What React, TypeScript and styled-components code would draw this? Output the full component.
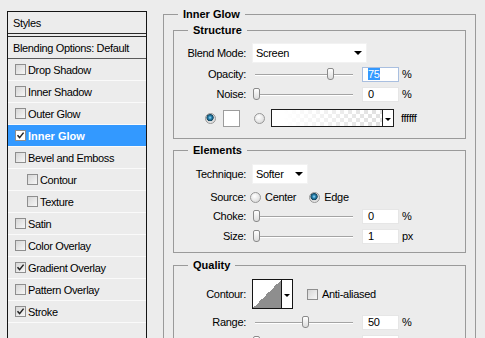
import styled, { createGlobalStyle } from 'styled-components';

const GlobalStyle = createGlobalStyle`
  html, body {
    margin: 0;
    height: 100%;
    overflow: hidden;
    background: #ececec;
  }
  body {
    font-family: "Liberation Sans", Arial, sans-serif;
    font-size: 11px;
    color: #000;
  }
`;

const Page = styled.div`
  display: flex;
  align-items: flex-start;
  box-sizing: border-box;
  height: 100vh;
  padding: 7px 0 0 7px;
`;

/* ---------- left list ---------- */

const StylesList = styled.div`
  flex-shrink: 0;
  box-sizing: border-box;
  width: 140px;
  height: 340px;
  margin-top: 4px;
  border: 1px solid #151515;
  border-bottom: none;
  letter-spacing: -0.35px;
`;

const ListHeader = styled.div`
  height: 21px;
  line-height: 22px;
  padding-left: 5px;
  border-bottom: 4px double #2a2a2a;
`;

const ListRow = styled.div<{ $selected?: boolean; $indent?: boolean; $strong?: boolean }>`
  display: flex;
  align-items: center;
  gap: 2px;
  height: 21px;
  padding-left: ${p => (p.$indent ? 19 : 7)}px;
  border-bottom: 1px solid ${p => (p.$strong ? '#5a5a5a' : '#fafafa')};
  background: ${p => (p.$selected ? '#3399ff' : 'transparent')};
  color: ${p => (p.$selected ? '#fff' : '#000')};
  font-weight: ${p => (p.$selected ? 'bold' : 'normal')};
  letter-spacing: ${p => (p.$selected ? '0' : '-0.35px')};
`;

const OptionsRow = styled(ListRow)`
  padding-left: 5px;
`;

const Box = styled.span<{ $white?: boolean }>`
  display: inline-flex;
  align-items: center;
  justify-content: center;
  box-sizing: border-box;
  width: 11px;
  height: 11px;
  flex-shrink: 0;
  border: 1px solid #8e8e8e;
  background: ${p => (p.$white ? '#fff' : 'linear-gradient(135deg, #d6d6d6, #f7f7f7)')};
`;

function CheckBox({ checked, white }: { checked?: boolean; white?: boolean }) {
  return (
    <Box $white={white}>
      {checked && (
        <svg width="9" height="9" viewBox="0 0 9 9">
          <path d="M1.5 4.2 L3.6 6.6 L7.6 1.6" fill="none" stroke="#222" strokeWidth="1.5" />
        </svg>
      )}
    </Box>
  );
}

const styleItems = [
  { name: 'Drop Shadow' },
  { name: 'Inner Shadow' },
  { name: 'Outer Glow' },
  { name: 'Inner Glow', checked: true, selected: true },
  { name: 'Bevel and Emboss' },
  { name: 'Contour', indent: true },
  { name: 'Texture', indent: true },
  { name: 'Satin' },
  { name: 'Color Overlay' },
  { name: 'Gradient Overlay', checked: true },
  { name: 'Pattern Overlay' },
  { name: 'Stroke', checked: true },
];

/* ---------- right panel ---------- */

const Settings = styled.div`
  margin-left: 16px;
`;

const Group = styled.fieldset<{ $inner?: boolean; $gap?: number; $pb?: number }>`
  min-width: 0;
  width: ${p => (p.$inner ? 'auto' : '313px')};
  height: ${p => (p.$inner ? 'auto' : '400px')};
  box-sizing: border-box;
  margin: ${p => (p.$inner ? `${p.$gap ?? 0}px 9px 0` : '0')};
  padding: 0 0 ${p => p.$pb ?? 0}px;
  border: 1px solid #9a9a9a;
`;

const GroupTitle = styled.legend`
  margin-left: 14px;
  padding: 0 5px;
  height: 14px;
  line-height: 14px;
  font-weight: bold;
`;

const Row = styled.div<{ $h?: number; $mt?: number; $pl?: number }>`
  display: flex;
  align-items: center;
  height: ${p => p.$h ?? 20}px;
  margin-top: ${p => p.$mt ?? 0}px;
  padding-left: ${p => p.$pl ?? 0}px;
  letter-spacing: -0.3px;
`;

const Label = styled.span`
  flex-shrink: 0;
  width: 72px;
  margin-right: 6px;
  text-align: right;
`;

const Dropdown = styled.div<{ $w: number }>`
  display: flex;
  align-items: center;
  justify-content: space-between;
  box-sizing: border-box;
  width: ${p => p.$w}px;
  height: 20px;
  padding: 0 4px 0 3px;
  background: #fff;
  border: 1px solid #f2f2f2;
`;

const Caret = styled.span`
  width: 0;
  height: 0;
  border-left: 4px solid transparent;
  border-right: 4px solid transparent;
  border-top: 4px solid #000;
`;

const SliderTrack = styled.div`
  position: relative;
  flex-shrink: 0;
  width: 104px;
  height: 14px;
  &::before {
    content: '';
    position: absolute;
    left: 3px;
    right: 3px;
    top: 7px;
    height: 1px;
    background: #a4a4a4;
    box-shadow: 0 1px 0 #fff;
  }
`;

const Thumb = styled.span`
  position: absolute;
  top: 1px;
  box-sizing: border-box;
  width: 7px;
  height: 12px;
  border: 1px solid #8a8a8a;
  border-radius: 2px 2px 3px 3px;
  background: linear-gradient(#ffffff, #dcdcdc);
`;

const NumberBox = styled.div<{ $focus?: boolean }>`
  box-sizing: border-box;
  width: 37px;
  height: 15px;
  margin-left: 6px;
  padding-left: 5px;
  line-height: 13px;
  background: #fff;
  border: 1px solid ${p => (p.$focus ? '#a9bfe0' : '#e6e6e6')};
`;

const Highlight = styled.span`
  background: #3399ff;
  color: #fff;
`;

const Unit = styled.span`
  margin-left: 3px;
`;

function Slider({
  label,
  value,
  pos,
  unit,
  focus,
  mt,
}: {
  label: string;
  value: number;
  pos: number;
  unit: string;
  focus?: boolean;
  mt?: number;
}) {
  return (
    <Row $mt={mt}>
      <Label>{label}</Label>
      <SliderTrack>
        <Thumb style={{ left: 1 + pos * 0.98 }} />
      </SliderTrack>
      <NumberBox $focus={focus}>{focus ? <Highlight>{value}</Highlight> : value}</NumberBox>
      <Unit>{unit}</Unit>
    </Row>
  );
}

const RadioDot = styled.span<{ $on?: boolean; $ml?: number }>`
  flex-shrink: 0;
  box-sizing: border-box;
  width: 11px;
  height: 11px;
  margin-left: ${p => p.$ml ?? 0}px;
  border-radius: 50%;
  border: 1px solid #979797;
  background: ${p =>
    p.$on
      ? 'radial-gradient(circle at 45% 40%, #9ee0ff 0, #2b86b3 1.6px, #12455f 3.3px, #d9d9d9 3.9px, #f6f6f6 100%)'
      : 'radial-gradient(circle at 40% 35%, #ffffff, #d2d2d2)'};
`;

const Swatch = styled.div`
  box-sizing: border-box;
  width: 17px;
  height: 17px;
  margin-left: 7px;
  background: #fff;
  border: 1px solid #9c9c9c;
`;

const GradientPicker = styled.div`
  display: flex;
  box-sizing: border-box;
  width: 123px;
  height: 18px;
  margin-left: 6px;
  border: 1px solid #1e1e1e;
`;

const GradientFill = styled.div`
  flex: 1;
  background:
    linear-gradient(to right, #fff 10%, rgba(255, 255, 255, 0) 90%),
    repeating-conic-gradient(#e2e2e2 0 25%, #fff 0 50%) 0 0 / 8px 8px;
`;

const PickerArrow = styled.div`
  display: flex;
  align-items: center;
  justify-content: center;
  width: 10px;
  background: #fff;
  border-left: 1px solid #1e1e1e;
`;

const SmallCaret = styled(Caret)`
  border-left-width: 3px;
  border-right-width: 3px;
  border-top-width: 3px;
  margin-top: 2px;
`;

const HexText = styled.span`
  margin-left: 7px;
`;

const OptionText = styled.span<{ $ml?: number }>`
  margin-left: ${p => p.$ml ?? 4}px;
`;

const ContourPicker = styled.div`
  display: flex;
  box-sizing: border-box;
  width: 41px;
  height: 30px;
  border: 1px solid #141414;
`;

const ContourGraph = styled.div`
  flex: 1;
  background: linear-gradient(to bottom right, #fff 50%, #8e8e8e 50%);
`;

const ContourArrow = styled(PickerArrow)`
  border-left-color: #141414;
`;

const AntiAliasBox = styled(Box)`
  margin-left: 14px;
`;

export default function App() {
  return (
    <>
      <GlobalStyle />
      <Page>
        <StylesList>
          <ListHeader>Styles</ListHeader>
          <OptionsRow $strong>Blending Options: Default</OptionsRow>
          {styleItems.map(item => (
            <ListRow key={item.name} $selected={item.selected} $indent={item.indent}>
              <CheckBox checked={item.checked} white={item.selected} />
              <span>{item.name}</span>
            </ListRow>
          ))}
        </StylesList>

        <Settings>
          <Group>
            <GroupTitle>Inner Glow</GroupTitle>

            <Group $inner $gap={2} $pb={10}>
              <GroupTitle>Structure</GroupTitle>
              <Row $mt={6}>
                <Label>Blend Mode:</Label>
                <Dropdown $w={115}>
                  <span>Screen</span>
                  <Caret />
                </Dropdown>
              </Row>
              <Slider label="Opacity:" value={75} pos={75} unit="%" focus mt={1} />
              <Slider label="Noise:" value={0} pos={0} unit="%" />
              <Row $mt={4} $pl={31}>
                <RadioDot $on />
                <Swatch />
                <RadioDot $ml={14} />
                <GradientPicker>
                  <GradientFill />
                  <PickerArrow>
                    <SmallCaret />
                  </PickerArrow>
                </GradientPicker>
                <HexText>ffffff</HexText>
              </Row>
            </Group>

            <Group $inner $gap={4} $pb={6}>
              <GroupTitle>Elements</GroupTitle>
              <Row $mt={7}>
                <Label>Technique:</Label>
                <Dropdown $w={56}>
                  <span>Softer</span>
                  <Caret />
                </Dropdown>
              </Row>
              <Row $mt={4} $h={18}>
                <Label>Source:</Label>
                <RadioDot $ml={-2} />
                <OptionText>Center</OptionText>
                <RadioDot $ml={13} $on />
                <OptionText>Edge</OptionText>
              </Row>
              <Slider label="Choke:" value={0} pos={0} unit="%" />
              <Slider label="Size:" value={1} pos={0} unit="px" />
            </Group>

            <Group $inner $gap={5}>
              <GroupTitle>Quality</GroupTitle>
              <Row $mt={7} $h={30}>
                <Label>Contour:</Label>
                <ContourPicker>
                  <ContourGraph />
                  <ContourArrow>
                    <SmallCaret />
                  </ContourArrow>
                </ContourPicker>
                <AntiAliasBox />
                <OptionText>Anti-aliased</OptionText>
              </Row>
              <Slider label="Range:" value={50} pos={50} unit="%" mt={3} />
              <Slider label="Jitter:" value={0} pos={0} unit="%" />
            </Group>
          </Group>
        </Settings>
      </Page>
    </>
  );
}
